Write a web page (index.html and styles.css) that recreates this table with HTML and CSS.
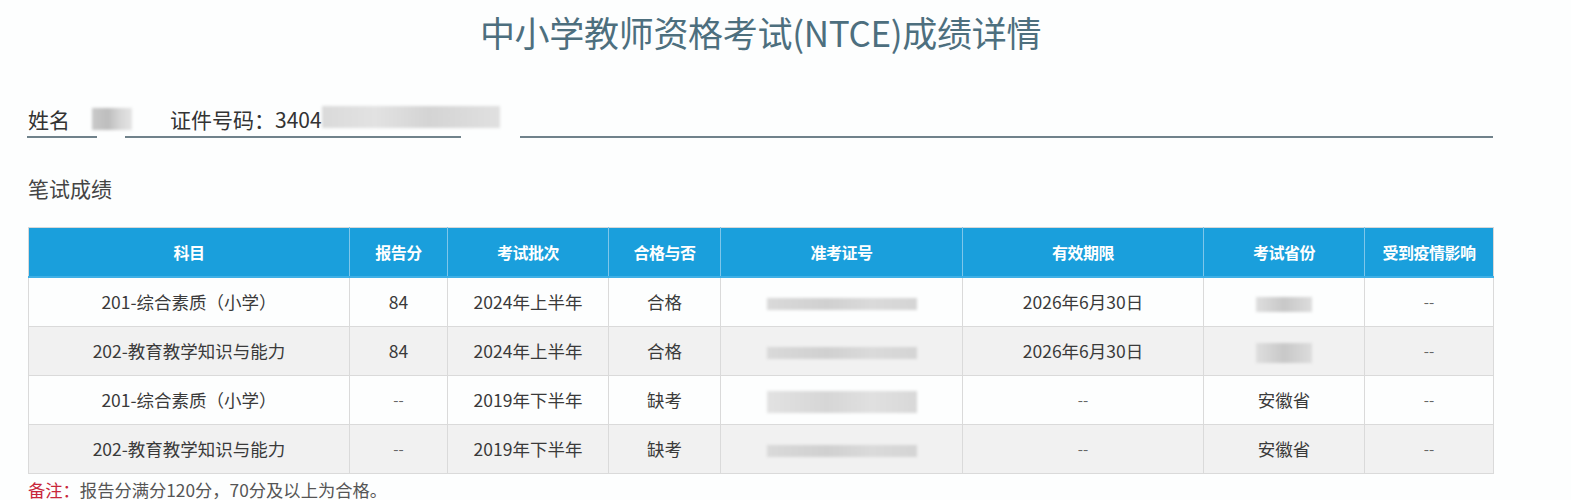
FILE: index.html
```html
<!DOCTYPE html>
<html lang="zh-CN">
<head>
<meta charset="utf-8">
<title>中小学教师资格考试(NTCE)成绩详情</title>
<link rel="stylesheet" href="styles.css">
</head>
<body>
<div class="page">
  <h1 class="title">中小学教师资格考试(NTCE)成绩详情</h1>

  <div class="info">
    <span class="label">姓名</span>
    <span class="redact redact-name"></span>
    <span class="label idno">证件号码：3404</span>
    <span class="redact redact-id"></span>
  </div>
  <div class="rules">
    <span class="rule r1"></span>
    <span class="rule r2"></span>
    <span class="rule r3"></span>
  </div>

  <h2 class="section">笔试成绩</h2>

  <table class="scores">
    <colgroup>
      <col class="w1"><col class="w2"><col class="w3"><col class="w4">
      <col class="w5"><col class="w6"><col class="w7"><col class="w8">
    </colgroup>
    <thead>
      <tr>
        <th>科目</th><th>报告分</th><th>考试批次</th><th>合格与否</th>
        <th>准考证号</th><th>有效期限</th><th>考试省份</th><th>受到疫情影响</th>
      </tr>
    </thead>
    <tbody>
      <tr>
        <td>201-综合素质（小学）</td><td>84</td><td>2024年上半年</td><td>合格</td>
        <td><span class="blur blur-ticket"></span></td><td>2026年6月30日</td>
        <td><span class="blur blur-prov"></span></td><td class="dash">--</td>
      </tr>
      <tr class="alt">
        <td>202-教育教学知识与能力</td><td>84</td><td>2024年上半年</td><td>合格</td>
        <td><span class="blur blur-ticket"></span></td><td>2026年6月30日</td>
        <td><span class="blur blur-prov tall"></span></td><td class="dash">--</td>
      </tr>
      <tr>
        <td>201-综合素质（小学）</td><td class="dash">--</td><td>2019年下半年</td><td>缺考</td>
        <td><span class="blur blur-ticket tall"></span></td><td class="dash">--</td>
        <td>安徽省</td><td class="dash">--</td>
      </tr>
      <tr class="alt">
        <td>202-教育教学知识与能力</td><td class="dash">--</td><td>2019年下半年</td><td>缺考</td>
        <td><span class="blur blur-ticket"></span></td><td class="dash">--</td>
        <td>安徽省</td><td class="dash">--</td>
      </tr>
    </tbody>
  </table>

  <p class="note"><span class="note-key">备注：</span>报告分满分120分，70分及以上为合格。</p>
</div>
</body>
</html>
```

FILE: styles.css
```css
html, body {
  margin: 0;
  padding: 0;
  background: #fdfefe;
}

body {
  font-family: "Noto Sans CJK SC", "Noto Sans", sans-serif;
  color: #333;
}

.page {
  width: 1465px;
  padding: 0 0 0 28px;
}

.title {
  margin: 0;
  padding-top: 8px;
  height: 48px;
  line-height: 48px;
  font-size: 35px;
  font-weight: 400;
  color: #4d6f7e;
  text-align: center;
  letter-spacing: -0.3px;
}

.info {
  display: flex;
  align-items: center;
  height: 28px;
  margin-top: 49px;
  font-size: 21px;
  line-height: 28px;
  color: #333;
}

.redact {
  display: block;
  background: linear-gradient(90deg, #c9c9c9, #bdbdbd 40%, #d6d6d6 70%, #e4e4e4);
  filter: blur(1.5px);
}

.redact-name {
  width: 40px;
  height: 22px;
  margin-left: 22px;
}

.idno {
  margin-left: 38px;
}

.redact-id {
  width: 178px;
  height: 22px;
  margin-top: -4px;
  background: linear-gradient(90deg, #dadada, #e2e2e2 30%, #d4d4d4 60%, #e0e0e0);
}

.rules {
  display: flex;
  margin-top: 3px;
  height: 2px;
}

.rule {
  display: block;
  height: 1.5px;
  background: #70828b;
}

.r1 { width: 70px; margin-left: -1px; }
.r2 { width: 336px; margin-left: 28px; }
.r3 { width: 973px; margin-left: 59px; }

.section {
  margin: 36px 0 0;
  height: 28px;
  line-height: 28px;
  font-size: 21px;
  font-weight: 400;
  color: #444;
}

.scores {
  margin-top: 25px;
  width: 1465px;
  border-collapse: collapse;
  table-layout: fixed;
  border: 1px solid #d8d8d8;
}

.w1 { width: 321px; }
.w2 { width: 98px; }
.w3 { width: 161px; }
.w4 { width: 112px; }
.w5 { width: 242px; }
.w6 { width: 241px; }
.w7 { width: 161px; }
.w8 { width: 129px; }

.scores th {
  height: 49px;
  padding: 0;
  background: #1a9fdc;
  color: #fff;
  font-size: 16px;
  font-weight: 700;
  letter-spacing: -0.5px;
  border-left: 1px solid #7ec6ea;
  border-bottom: 2px solid #3fb0e6;
  box-sizing: border-box;
}

.scores th:first-child { border-left: none; }

.scores td {
  height: 48px;
  padding: 0;
  text-align: center;
  font-size: 17.5px;
  color: #3a3a3a;
  border: 1px solid #dadada;
}

.scores tr.alt td { background: #f1f1f1; }

.scores td.dash { color: #666; font-size: 15px; }

.blur {
  display: inline-block;
  vertical-align: middle;
  filter: blur(1.5px);
}

.blur-ticket {
  width: 150px;
  height: 12px;
  background: linear-gradient(90deg, #d9d9d9, #d0d0d0 40%, #dadada 70%, #d4d4d4);
}

.blur-ticket.tall { height: 22px; background: linear-gradient(90deg, #e2e2e2, #d6d6d6 40%, #e0e0e0 70%, #d8d8d8); }

.blur-prov {
  width: 56px;
  height: 15px;
  background: linear-gradient(90deg, #dedede, #c8c8c8 50%, #dcdcdc);
}

.blur-prov.tall { height: 20px; }

.note {
  margin: 5px 0 0;
  font-size: 17.3px;
  line-height: 22px;
  color: #555;
}

.note-key { color: #c8263a; }
```
